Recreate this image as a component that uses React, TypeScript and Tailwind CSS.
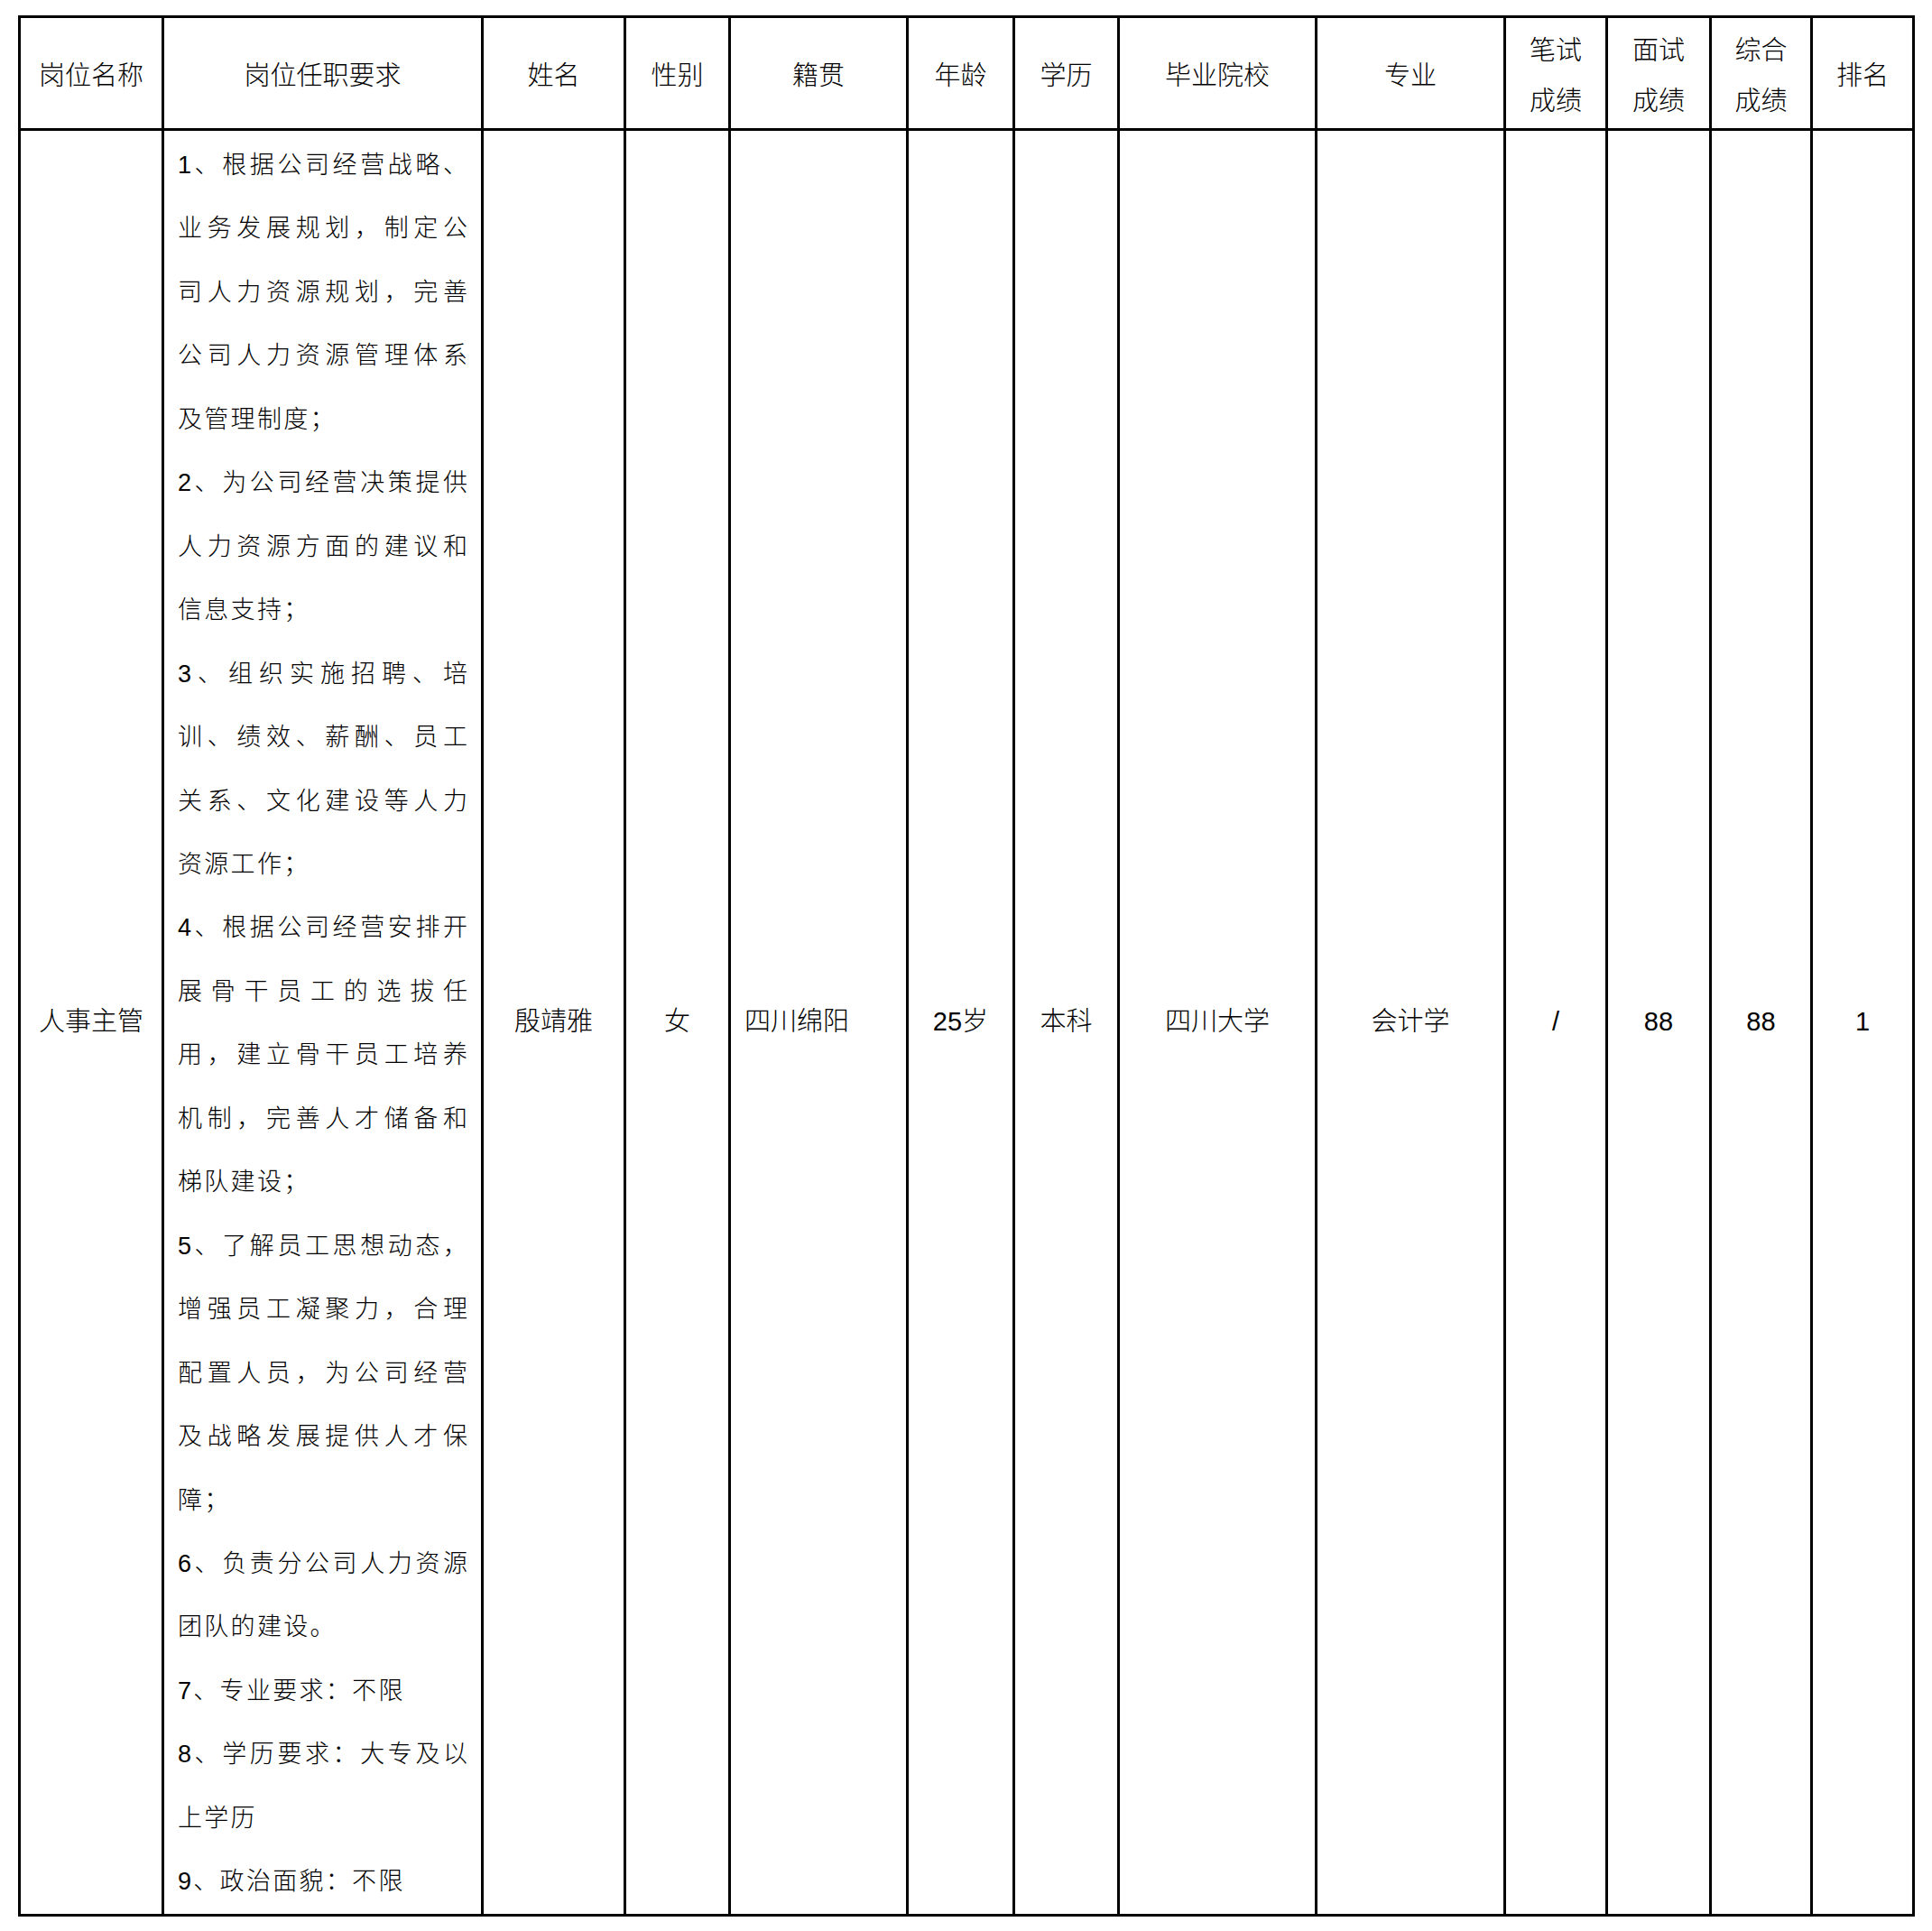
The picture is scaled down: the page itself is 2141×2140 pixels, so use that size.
import React from 'react';

const headers: { label: React.ReactNode; w: string }[] = [
    { label: '岗位名称', w: 'w-[159px]' },
    { label: '岗位任职要求', w: 'w-[354px]' },
    { label: '姓名', w: 'w-[158px]' },
    { label: '性别', w: 'w-[116px]' },
    { label: '籍贯', w: 'w-[197px]' },
    { label: '年龄', w: 'w-[118px]' },
    { label: '学历', w: 'w-[116px]' },
    { label: '毕业院校', w: 'w-[219px]' },
    { label: '专业', w: 'w-[209px]' },
    { label: <>笔试<br />成绩</>, w: 'w-[113px]' },
    { label: <>面试<br />成绩</>, w: 'w-[115px]' },
    { label: <>综合<br />成绩</>, w: 'w-[112px]' },
    { label: '排名', w: 'w-[113px]' },
];

// [text, justified]
const duties: [string, boolean][] = [
    ['1、根据公司经营战略、', true],
    ['业务发展规划，制定公', true],
    ['司人力资源规划，完善', true],
    ['公司人力资源管理体系', true],
    ['及管理制度；', false],
    ['2、为公司经营决策提供', true],
    ['人力资源方面的建议和', true],
    ['信息支持；', false],
    ['3、组织实施招聘、培', true],
    ['训、绩效、薪酬、员工', true],
    ['关系、文化建设等人力', true],
    ['资源工作；', false],
    ['4、根据公司经营安排开', true],
    ['展骨干员工的选拔任', true],
    ['用，建立骨干员工培养', true],
    ['机制，完善人才储备和', true],
    ['梯队建设；', false],
    ['5、了解员工思想动态，', true],
    ['增强员工凝聚力，合理', true],
    ['配置人员，为公司经营', true],
    ['及战略发展提供人才保', true],
    ['障；', false],
    ['6、负责分公司人力资源', true],
    ['团队的建设。', false],
    ['7、专业要求：不限', false],
    ['8、学历要求：大专及以', true],
    ['上学历', false],
    ['9、政治面貌：不限', false],
];

const cell = 'border-[3px] border-black align-middle text-center';

const App: React.FC = () => {
    return (
        <div className="min-h-[2140px] w-[2141px] bg-white pt-[17px] pl-[20px] text-black font-['Liberation_Sans','Noto_Sans_CJK_SC',sans-serif]">
            <table className="table-fixed border-collapse w-[2102px]">
                <colgroup>
                    {headers.map((h, i) => (
                        <col key={i} className={h.w} />
                    ))}
                </colgroup>
                <thead>
                    <tr className="h-[125px]">
                        {headers.map((h, i) => (
                            <th key={i} className={`${cell} font-light text-[29px] leading-[56px] font-['Noto_Sans_CJK_SC',serif]`}>
                                {h.label}
                            </th>
                        ))}
                    </tr>
                </thead>
                <tbody className="text-[29px] font-light">
                    <tr>
                        <td className={cell}>人事主管</td>
                        <td className={`${cell} px-[15px] pt-[3px] pb-0 text-left text-[27px] leading-[70.45px]`}>
                            {duties.map(([line, full], i) => (
                                <div key={i} className={full ? 'text-justify [text-align-last:justify]' : 'text-left tracking-[2.3px]'}>
                                    {line}
                                </div>
                            ))}
                        </td>
                        <td className={cell}>殷靖雅</td>
                        <td className={cell}>女</td>
                        <td className={`${cell} text-left pl-[15px]`}>四川绵阳</td>
                        <td className={cell}>25岁</td>
                        <td className={cell}>本科</td>
                        <td className={cell}>四川大学</td>
                        <td className={cell}>会计学</td>
                        <td className={cell}>/</td>
                        <td className={cell}>88</td>
                        <td className={cell}>88</td>
                        <td className={cell}>1</td>
                    </tr>
                </tbody>
            </table>
        </div>
    );
};

export default App;
